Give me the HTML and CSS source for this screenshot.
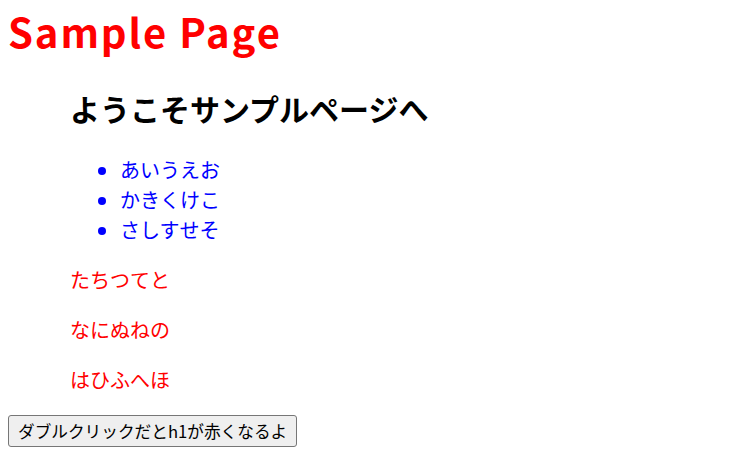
FILE: index.html
```html
<!DOCTYPE html>
<html lang="ja">
<head>
<meta charset="utf-8">
<title>Sample Page</title>
<link rel="stylesheet" href="styles.css">
</head>
<body>
<h1 class="title">Sample Page</h1>
<section class="content">
  <h2 class="welcome">ようこそサンプルページへ</h2>
  <ul class="list">
    <li>あいうえお</li>
    <li>かきくけこ</li>
    <li>さしすせそ</li>
  </ul>
  <p class="para">たちつてと</p>
  <p class="para">なにぬねの</p>
  <p class="para">はひふへほ</p>
</section>
<button class="btn" type="button">ダブルクリックだとh1が赤くなるよ</button>
</body>
</html>
```
FILE: styles.css
```css
body {
  margin: 8px;
  font-family: "Noto Sans CJK JP", "Noto Sans", sans-serif;
  font-size: 20px;
  line-height: 30px;
  color: #000;
  background: #fff;
}
.title {
  margin: 0;
  font-size: 40px;
  line-height: 46px;
  font-weight: bold;
  letter-spacing: 1.9px;
  color: #ff0000;
}
.content {
  margin-left: 62px;
}
.welcome {
  margin: 32px 0 24px;
  font-size: 30px;
  line-height: 45px;
  font-weight: bold;
}
.list {
  margin: 20px 0;
  padding-left: 50px;
  color: #0000ff;
}
.para {
  margin: 20px 0;
  color: #ff0000;
}
.btn {
  box-sizing: border-box;
  height: 32px;
  font-family: "Noto Sans CJK JP", sans-serif;
  font-size: 16.67px;
  line-height: 22px;
  padding: 4px 9px;
  border: 1px solid #767676;
  border-radius: 3px;
  background: #efefef;
  color: #000;
}
```
